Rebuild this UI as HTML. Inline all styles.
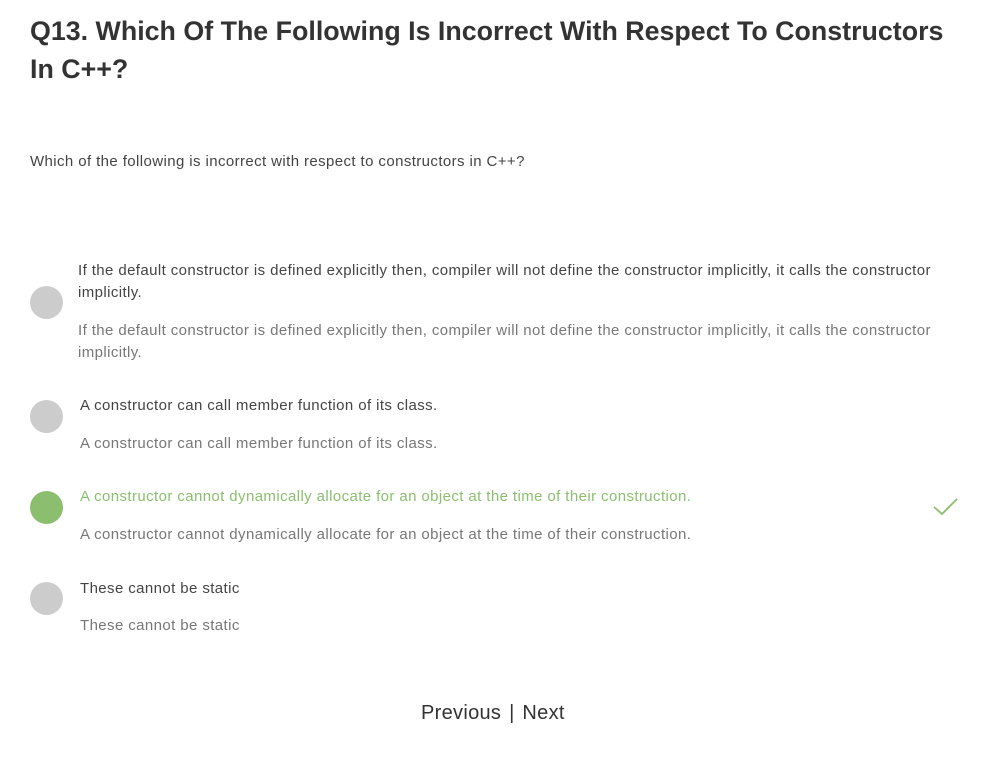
<!DOCTYPE html>
<html><head><style>
body{margin:0;background:#fff;font-family:"Liberation Sans",sans-serif;width:986px;height:758px;overflow:hidden;position:relative}
h1{position:absolute;left:30px;top:12px;margin:0;font-size:26.8px;line-height:38px;font-weight:bold;color:#333;width:930px}
.t{position:absolute;font-size:15px;line-height:22px;color:#444;letter-spacing:0.4px}
.g{color:#777}
.c{position:absolute;left:30px;width:33px;height:33px;border-radius:50%;background:#ccc}
</style></head><body>
<h1>Q13. Which Of The Following Is Incorrect With Respect To Constructors In C++?</h1>
<div class="t" style="left:30px;top:151px">Which of the following is incorrect with respect to constructors in C++?</div>
<div class="c" style="top:286px"></div>
<div class="t" style="left:78px;top:260px;width:870px">If the default constructor is defined explicitly then, compiler will not define the constructor implicitly, it calls the constructor implicitly.</div>
<div class="t g" style="left:78px;top:320px;width:870px">If the default constructor is defined explicitly then, compiler will not define the constructor implicitly, it calls the constructor implicitly.</div>
<div class="c" style="top:400px"></div>
<div class="t" style="left:80px;top:395px">A constructor can call member function of its class.</div>
<div class="t g" style="left:80px;top:433px">A constructor can call member function of its class.</div>
<div class="c" style="top:491px;background:#8bbf6f"></div>
<div class="t" style="left:80px;top:486px;color:#8bbf6f">A constructor cannot dynamically allocate for an object at the time of their construction.</div>
<svg style="position:absolute;left:933px;top:498px" width="26" height="18"><path d="M1 9 L9 16 L24 1" stroke="#8bbf6f" stroke-width="1.8" fill="none"/></svg>
<div class="t g" style="left:80px;top:524px">A constructor cannot dynamically allocate for an object at the time of their construction.</div>
<div class="c" style="top:582px"></div>
<div class="t" style="left:80px;top:578px">These cannot be static</div>
<div class="t g" style="left:80px;top:615px">These cannot be static</div>
<div class="t" style="left:421px;top:700px;font-size:20px;line-height:26px;color:#333;letter-spacing:0.3px;word-spacing:2px">Previous | Next</div>
</body></html>
